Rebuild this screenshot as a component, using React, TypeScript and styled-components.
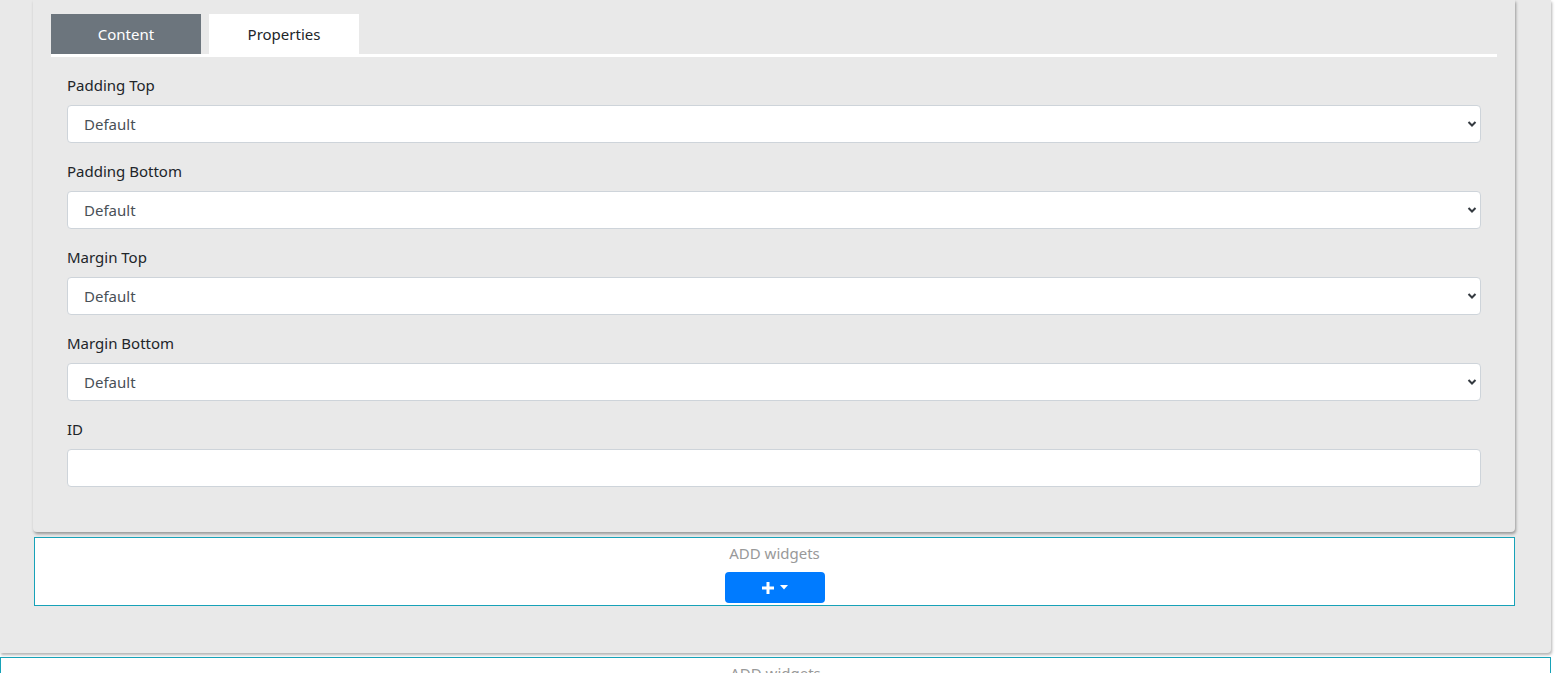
import React from 'react';
import styled, { createGlobalStyle } from 'styled-components';

const GlobalStyle = createGlobalStyle`
  html, body {
    margin: 0;
    padding: 0;
    background: #fff;
    font-family: "Noto Sans", "Open Sans", sans-serif;
    overflow: hidden;
  }
`;

const fields = ['Padding Top', 'Padding Bottom', 'Margin Top', 'Margin Bottom'];

const Page = styled.div`
  width: 1561px;
  height: 673px;
  overflow: hidden;
`;

const Section = styled.div`
  width: 1551px;
  background: #e9e9e9;
  padding: 0 0 47px 33px;
  box-sizing: border-box;
  box-shadow: 1px 2px 3px rgba(0, 0, 0, 0.3);
  border-bottom-right-radius: 4px;
`;

const Panel = styled.div`
  width: 1482px;
  background: #e9e9e9;
  padding: 14px 18px 45px;
  box-sizing: border-box;
  border-radius: 0 0 4px 4px;
  box-shadow: 1px 2px 3px rgba(0, 0, 0, 0.35);
`;

const TabBar = styled.div`
  display: flex;
  gap: 8px;
  border-bottom: 3px solid #fff;
`;

const Tab = styled.div<{ $active?: boolean }>`
  width: 150px;
  height: 40px;
  display: flex;
  align-items: center;
  justify-content: center;
  font-size: 15px;
  color: ${(p) => (p.$active ? '#fff' : '#212529')};
  background: ${(p) => (p.$active ? '#6c757d' : '#fff')};
`;

const Form = styled.div`
  padding: 18px 16px 0;
  display: flex;
  flex-direction: column;
  gap: 18px;
`;

const Group = styled.div`
  display: flex;
  flex-direction: column;
  gap: 10px;
`;

const Label = styled.label`
  font-size: 15px;
  line-height: 20px;
  color: #212529;
`;

const SelectWrap = styled.div`
  position: relative;
`;

const Select = styled.select`
  appearance: none;
  -webkit-appearance: none;
  width: 100%;
  height: 38px;
  padding: 0 16px;
  font-family: inherit;
  font-size: 15px;
  color: #495057;
  background: #fff;
  border: 1px solid #ced4da;
  border-radius: 4px;
  box-sizing: border-box;
  outline: none;
`;

const Chevron = styled.svg`
  position: absolute;
  right: 4px;
  top: 14px;
  width: 10px;
  height: 10px;
  pointer-events: none;
`;

const TextInput = styled.input`
  width: 100%;
  height: 38px;
  padding: 0 16px;
  font-size: 15px;
  background: #fff;
  border: 1px solid #ced4da;
  border-radius: 4px;
  box-sizing: border-box;
  outline: none;
`;

const Widgets = styled.div<{ $width: number }>`
  width: ${(p) => p.$width}px;
  box-sizing: border-box;
  border: 1px solid #17a2b8;
  background: #fff;
  display: flex;
  flex-direction: column;
  align-items: center;
  padding: 5px 0 2px;
`;

const WidgetsTitle = styled.div`
  font-size: 15px;
  line-height: 20px;
  color: #999;
`;

const AddButton = styled.button`
  margin-top: 9px;
  width: 100px;
  height: 31px;
  border: none;
  border-radius: 4px;
  background: #007bff;
  color: #fff;
  display: flex;
  align-items: center;
  justify-content: center;
  gap: 5px;
  padding: 0;
`;

const WidgetsGap = styled.div`
  margin: 5px 0 0 1px;
`;

const NextBox = styled.div`
  margin-top: 4px;
`;

const ChevronIcon = () => (
  <Chevron viewBox="0 0 10 10">
    <path d="M1.5 3 L5 6.5 L8.5 3" fill="none" stroke="#343a40" strokeWidth="2" />
  </Chevron>
);

const AddWidgets: React.FC<{ width: number; button?: boolean }> = ({ width, button = true }) => (
  <Widgets $width={width}>
    <WidgetsTitle>ADD widgets</WidgetsTitle>
    {button && (
      <AddButton>
        <svg width="14" height="14" viewBox="0 0 14 14">
          <path d="M7 1 V13 M1 7 H13" stroke="#fff" strokeWidth="3" />
        </svg>
        <svg width="8" height="5" viewBox="0 0 8 5">
          <path d="M0 0 H8 L4 4.5 Z" fill="#fff" />
        </svg>
      </AddButton>
    )}
  </Widgets>
);

export default function App() {
  return (
    <Page>
      <GlobalStyle />
      <Section>
        <Panel>
          <TabBar>
            <Tab $active>Content</Tab>
            <Tab>Properties</Tab>
          </TabBar>
          <Form>
            {fields.map((f) => (
              <Group key={f}>
                <Label>{f}</Label>
                <SelectWrap>
                  <Select defaultValue="Default">
                    <option>Default</option>
                  </Select>
                  <ChevronIcon />
                </SelectWrap>
              </Group>
            ))}
            <Group>
              <Label>ID</Label>
              <TextInput type="text" />
            </Group>
          </Form>
        </Panel>
        <WidgetsGap>
          <AddWidgets width={1481} />
        </WidgetsGap>
      </Section>
      <NextBox>
        <AddWidgets width={1551} button={false} />
      </NextBox>
    </Page>
  );
}
